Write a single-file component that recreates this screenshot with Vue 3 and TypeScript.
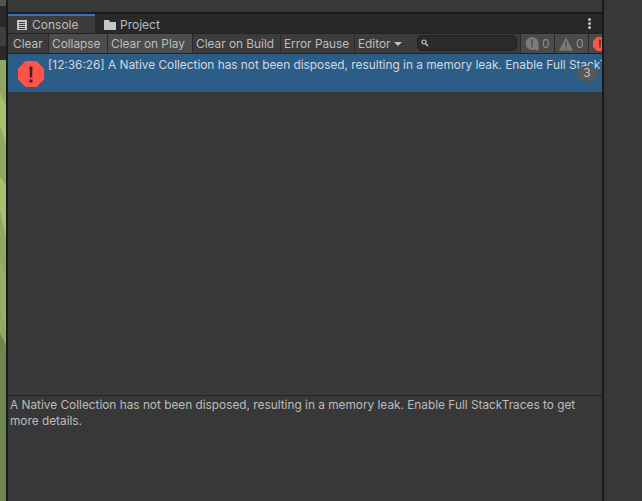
<script setup lang="ts">
const buttons = [
  { label: 'Clear', active: false, w: 41 },
  { label: 'Collapse', active: true, w: 59 },
  { label: 'Clear on Play', active: true, w: 85 },
  { label: 'Clear on Build', active: false, w: 88 },
  { label: 'Error Pause', active: false, w: 74 },
]
</script>

<template>
  <div class="page">
    <div class="scene">
      <div class="scene-cap"></div>
      <div class="scene-dark"></div>
      <div class="scene-panel"></div>
      <div class="scene-dark scene-dark-low"></div>
      <svg class="terrain" viewBox="0 0 6 441" preserveAspectRatio="none">
        <rect width="6" height="441" fill="#8fa862" />
        <path d="M0 33L6 45V85L0 65ZM0 117L6 125V178L0 150Z" fill="#a5c06e" />
        <path d="M0 200L6 215V270L0 250Z" fill="#97b066" />
        <path d="M0 273L6 285V441H0Z" fill="#6d8650" />
      </svg>
    </div>
    <div class="window">
      <div class="top-strip"></div>
      <div class="tabbar">
        <div class="tab tab-active">
          <svg class="tab-icon" viewBox="0 0 12 12">
            <path d="M1 1h10v10H1z" fill="#c4c4c4" />
            <path d="M3 3h6v1H3zM3 5h6v1H3zM3 7h6v1H3zM3 9h6v1H3z" fill="#3c3c3c" />
          </svg>
          <span>Console</span>
        </div>
        <div class="tab">
          <svg class="tab-icon" viewBox="0 0 12 12">
            <path d="M0 1h5l1 2h6v8H0z" fill="#c4c4c4" />
          </svg>
          <span>Project</span>
        </div>
        <div class="kebab"><i></i><i></i><i></i></div>
      </div>
      <div class="toolbar">
        <div
          v-for="b in buttons"
          :key="b.label"
          class="tbtn"
          :class="{ on: b.active }"
          :style="{ width: b.w + 'px' }"
        >{{ b.label }}</div>
        <div class="tbtn editor">Editor<span class="caret"></span></div>
        <div class="search-wrap">
          <div class="search">
            <svg class="search-icon" viewBox="0 0 8 8">
              <circle cx="3" cy="3" r="2" fill="none" stroke="#c4c4c4" stroke-width="1.2" />
              <path d="M4.5 4.5L7 7" stroke="#c4c4c4" stroke-width="1.4" />
            </svg>
          </div>
        </div>
        <div class="count">
          <svg class="count-icon" viewBox="0 0 14 14">
            <path d="M7 0a6.500 6.500 0 0 1 6.500 6.500V14L10 12.400A6.500 6.500 0 1 1 7 0z" fill="#7c7c7c" />
            <path d="M6.200 2.500h1.600v6H6.200zM6.200 9.500h1.600v1.500H6.200z" fill="#4c4c4c" />
          </svg>
          <span>0</span>
        </div>
        <div class="count">
          <svg class="count-icon" viewBox="0 0 14 14">
            <path d="M7 .5L14 13.500H0z" fill="#7c7c7c" />
            <path d="M6.300 4.500h1.400v5H6.300zM6.300 10.300h1.400v1.500H6.300z" fill="#4c4c4c" />
          </svg>
          <span>0</span>
        </div>
        <div class="count count-err">
          <svg class="count-icon" viewBox="0 0 14 14">
            <path d="M4 0h6l4 4v6l-4 4H4l-4-4V4z" fill="#ff534a" />
            <path d="M6.200 2.500h1.600v6H6.200zM6.200 9.500h1.600v1.500H6.200z" fill="#4c2b2b" />
          </svg>
        </div>
      </div>
      <div class="list">
        <div class="row">
          <svg class="err-icon" viewBox="0 0 28 28">
            <path d="M8.500 1h11L27 8.500v11L19.500 27h-11L1 19.500v-11z" fill="#ff534a" />
            <path d="M12.500 6.500h3l-.4 11h-2.200zM12.500 19.500h3V22.500h-3z" fill="#4a1f1f" />
          </svg>
          <div class="msg">[12:36:26] A Native Collection has not been disposed, resulting in a memory leak. Enable Full StackTraces to get more details.</div>
          <div class="badge">3</div>
        </div>
      </div>
      <div class="details">A Native Collection has not been disposed, resulting in a memory leak. Enable Full StackTraces to get more details.</div>
    </div>
  </div>
</template>

<style scoped>
.page {
  width: 642px;
  height: 501px;
  display: flex;
  background: #383838;
  overflow: hidden;
  font-family: Inter, "Noto Sans", sans-serif;
  font-size: 11.84px;
  color: #bcbcbc;
}
.scene {
  width: 6px;
  flex: none;
  display: flex;
  flex-direction: column;
}
.scene-cap {
  height: 6px;
  background: #57524e;
  flex: none;
}
.scene-dark {
  height: 21px;
  background: #2a2a2a;
  flex: none;
}
.scene-panel {
  height: 19px;
  background: #3e3e3e;
  flex: none;
}
.scene-dark-low {
  height: 14px;
}
.terrain {
  flex: 1;
  width: 6px;
  min-height: 0;
  display: block;
}
.window {
  width: 598px;
  flex: none;
  display: flex;
  flex-direction: column;
  border-left: 2px solid #1a1a1a;
  border-right: 2px solid #1a1a1a;
  box-sizing: border-box;
}
.top-strip {
  height: 14px;
  background: #383838;
  border-bottom: 2px solid #1a1a1a;
  box-sizing: border-box;
  flex: none;
}
.tabbar {
  height: 19px;
  background: #282828;
  display: flex;
  flex: none;
  position: relative;
}
.tab {
  width: 76px;
  display: flex;
  align-items: center;
  gap: 4px;
  padding-left: 9px;
  padding-top: 2px;
  box-sizing: border-box;
  font-size: 12px;
}
.tab-active {
  width: 87px;
  background: #3c3c3c;
  border-top: 2px solid #3a72b0;
  padding-top: 0;
  padding-left: 8px;
}
.tab-icon {
  width: 12px;
  height: 12px;
  flex: none;
}
.kebab {
  position: absolute;
  right: 11px;
  top: 4px;
  display: flex;
  flex-direction: column;
  gap: 1px;
}
.kebab i {
  width: 3px;
  height: 3px;
  background: #c4c4c4;
  border-radius: 50%;
}
.toolbar {
  height: 21px;
  background: #3c3c3c;
  display: flex;
  flex: none;
  border-top: 1px solid #232323;
  border-bottom: 1px solid #232323;
  box-sizing: border-box;
  overflow: hidden;
}
.tbtn {
  flex: none;
  height: 100%;
  display: flex;
  align-items: center;
  padding-left: 3px;
  box-sizing: border-box;
  border-right: 1px solid #2a2a2a;
}
.tbtn.on {
  background: #4c4c4c;
}
.tbtn:first-child {
  padding-left: 5px;
}
.editor {
  width: 51px;
  gap: 3px;
  border-right: none;
}
.caret {
  width: 0;
  height: 0;
  border-left: 4px solid transparent;
  border-right: 4px solid transparent;
  border-top: 4px solid #c4c4c4;
}
.search-wrap {
  width: 114px;
  flex: none;
  padding: 1px 3px 0 11px;
  box-sizing: border-box;
}
.search {
  height: 16px;
  background: #2a2a2a;
  border: 1px solid #212121;
  border-radius: 5px;
  display: flex;
  align-items: center;
  padding-left: 3px;
  box-sizing: border-box;
}
.search-icon {
  width: 8px;
  height: 8px;
}
.count {
  flex: none;
  width: 34px;
  display: flex;
  align-items: center;
  gap: 3px;
  padding-left: 4px;
  box-sizing: border-box;
  background: #4a4a4a;
  border-left: 1px solid #2a2a2a;
  color: #8f8f8f;
}
.count-err {
  width: 14px;
}
.count-icon {
  width: 14px;
  height: 14px;
  flex: none;
}
.list {
  flex: 1;
  background: #383838;
  min-height: 0;
}
.row {
  height: 38px;
  background: #2c5d87;
  position: relative;
  overflow: hidden;
  color: #d2d9e0;
}
.err-icon {
  position: absolute;
  left: 9px;
  top: 6px;
  width: 28px;
  height: 28px;
}
.msg {
  position: absolute;
  left: 40px;
  top: 3px;
  white-space: nowrap;
  line-height: 16px;
}
.badge {
  position: absolute;
  right: 5px;
  top: 12px;
  width: 20px;
  height: 15px;
  border-radius: 8px;
  background: #585858;
  text-align: center;
  line-height: 15px;
  color: #c4c4c4;
}
.details {
  height: 106px;
  flex: none;
  border-top: 1px solid #232323;
  padding: 1px 10px 0 2px;
  box-sizing: border-box;
  line-height: 16px;
}
</style>
